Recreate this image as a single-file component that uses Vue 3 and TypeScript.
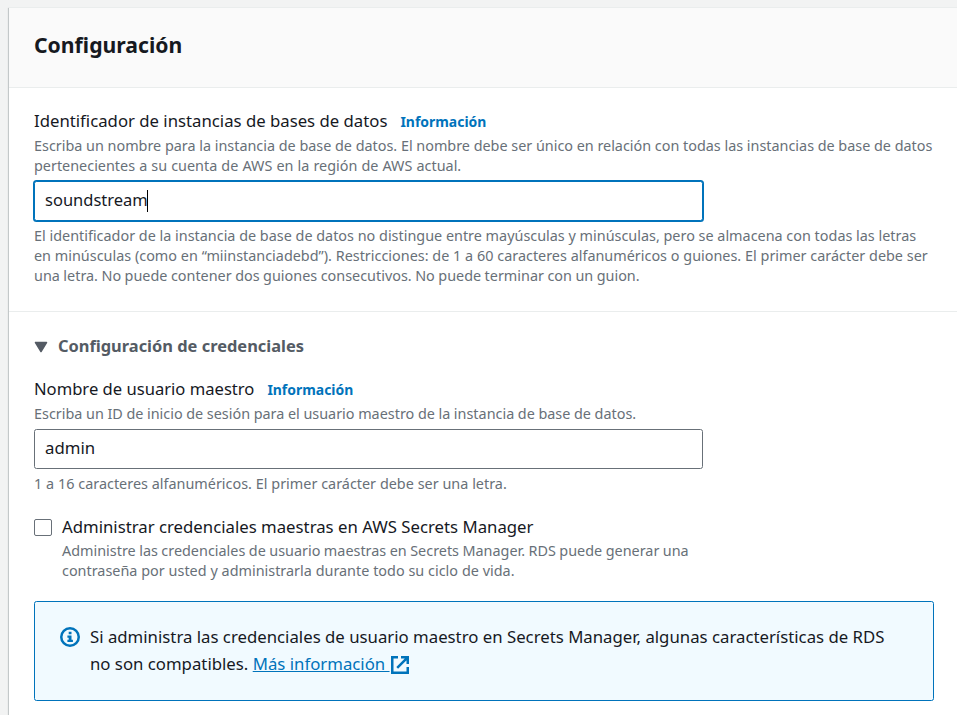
<script setup lang="ts">
import { ref } from 'vue'

const identifier = ref('soundstream')
const username = ref('admin')
const expanded = ref(true)
const managed = ref(false)
</script>

<template>
  <main class="page">
    <section class="card">
      <header class="card-header">
        <h2>Configuración</h2>
      </header>

      <div class="group identifier">
        <div class="label-row">
          <span class="label l-id">Identificador de instancias de bases de datos</span>
          <a class="info">Información</a>
        </div>
        <p class="hint">
          <span class="line w1">Escriba un nombre para la instancia de base de datos. El nombre debe ser único en relación con todas las instancias de base de datos</span>
          <span class="line w2">pertenecientes a su cuenta de AWS en la región de AWS actual.</span>
        </p>
        <div class="field focused"><span class="value v-id">{{ identifier }}</span><i class="caret"></i></div>
        <p class="hint">
          <span class="line">El identificador de la instancia de base de datos no distingue entre mayúsculas y minúsculas, pero se almacena con todas las letras</span>
          <span class="line w3">en minúsculas (como en “miinstanciadebd”). Restricciones: de 1 a 60 caracteres alfanuméricos o guiones. El primer carácter debe ser</span>
          <span class="line w4">una letra. No puede contener dos guiones consecutivos. No puede terminar con un guion.</span>
        </p>
      </div>

      <div class="group credentials">
        <h3 @click="expanded = !expanded">
          <svg class="arrow" viewBox="0 0 14 12" width="14" height="12"><path d="M1.5 1.5h11L7 10.5z" fill="#545b64" stroke="#545b64" stroke-width="1.5" stroke-linejoin="round" /></svg>
          <span>Configuración de credenciales</span>
        </h3>

        <template v-if="expanded">
          <div class="label-row">
            <span class="label l-user">Nombre de usuario maestro</span>
            <a class="info">Información</a>
          </div>
          <p class="hint"><span class="line w5">Escriba un ID de inicio de sesión para el usuario maestro de la instancia de base de datos.</span></p>
          <div class="field"><span class="value">{{ username }}</span></div>
          <p class="hint"><span class="line w6">1 a 16 caracteres alfanuméricos. El primer carácter debe ser una letra.</span></p>

          <div class="check" @click="managed = !managed">
            <span class="box" :class="{ on: managed }"></span>
            <div>
              <div class="label l-check">Administrar credenciales maestras en AWS Secrets Manager</div>
              <p class="hint">
                <span class="line w7">Administre las credenciales de usuario maestras en Secrets Manager. RDS puede generar una</span>
                <span class="line w6">contraseña por usted y administrarla durante todo su ciclo de vida.</span>
              </p>
            </div>
          </div>

          <div class="alert">
            <svg class="info-icon" viewBox="0 0 20 20" width="20" height="20">
              <circle cx="10" cy="10" r="8.75" fill="none" stroke="#0073bb" stroke-width="2.5" />
              <path d="M8.7 4.8h2.8v2.5H8.7zM7.4 8.5h4.1v4.3h1.4V15H7.4v-2.2h1.3v-2.1H7.4z" fill="#0073bb" />
            </svg>
            <div class="message">
              <span class="line">Si administra las credenciales de usuario maestro en Secrets Manager, algunas características de RDS</span>
              <span class="line last"><span>no son compatibles.&nbsp;</span><a class="more">Más información&nbsp;</a><svg class="external" viewBox="0 0 18 18" width="18" height="18"><path d="M7 1.25H1.25v15.5h15.5V11M10 1.25h6.75V8M16.4 1.6L6.2 11.8" fill="none" stroke="#0073bb" stroke-width="2.5" /></svg></span>
            </div>
          </div>
        </template>
      </div>
    </section>
  </main>
</template>

<style>
body {
  background: #f2f3f3;
  overflow: hidden;
}
</style>

<style scoped>
.page {
  box-sizing: border-box;
  height: 715px;
  padding: 7px 0 0 9px;
  overflow: hidden;
  font-family: "Noto Sans", "Open Sans", sans-serif;
  color: #16191f;
}
.card {
  min-height: 740px;
  background: #fff;
  border-top: 1px solid #eaeded;
  box-shadow: 0 1px 1px 0 rgba(0, 28, 36, 0.3), -1px 1px 1px 0 rgba(0, 28, 36, 0.15);
}
.card-header {
  box-sizing: border-box;
  height: 80px;
  padding: 22px 25px 0;
  background: #fafafa;
  border-bottom: 1px solid #eaeded;
}
h2, h3, p { margin: 0; }
h2 {
  font-size: 21.2px;
  line-height: 30px;
  font-weight: 700;
}
.group { padding: 0 23px 0 25px; }
.identifier {
  padding-top: 20px;
  padding-bottom: 25px;
  border-bottom: 1px solid #eaeded;
}
.credentials { padding-top: 20px; }
.label-row {
  display: flex;
  align-items: flex-start;
  height: 27px;
  gap: 13px;
  margin-bottom: 1px;
  white-space: nowrap;
}
.label {
  height: 27px;
  font-size: 16.74px;
  line-height: 25px;
  white-space: nowrap;
}
.l-user { font-size: 16.6px; }
.l-check { font-size: 16.75px; }
.info {
  padding-top: 1px;
  font-size: 13.95px;
  line-height: 26px;
  font-weight: 700;
  color: #0073bb;
}
.hint {
  font-size: 14.4px;
  line-height: 20px;
  color: #687078;
}
.line {
  display: block;
  white-space: nowrap;
}
.w1 { word-spacing: -0.06px; }
.w2 { word-spacing: 0.35px; }
.w3 { word-spacing: 0.06px; }
.w4 { word-spacing: -0.25px; }
.w5 { word-spacing: -0.12px; }
.w6 { word-spacing: 0.1px; }
.w7 { word-spacing: -0.25px; }
.field {
  box-sizing: border-box;
  display: flex;
  align-items: center;
  width: 669px;
  height: 40px;
  margin: 5px 0;
  padding: 0 10px;
  border: 1px solid #687078;
  border-radius: 2.5px;
  background: #fff;
  font-size: 16.8px;
}
.focused {
  border-color: #0073bb;
  box-shadow: 0 0 0 1px #0073bb;
}
.value {
  padding-bottom: 2px;
  line-height: 24px;
}
.v-id { font-size: 16.5px; }
.caret {
  width: 1px;
  height: 22px;
  margin-left: -1px;
  background: #000;
}
h3 {
  display: flex;
  align-items: center;
  gap: 10px;
  height: 28px;
  margin-bottom: 16px;
  font-size: 16.43px;
  line-height: 28px;
  color: #545b64;
}
.arrow { margin-top: 2px; }
.check {
  display: flex;
  gap: 10px;
  margin-top: 20px;
}
.box {
  box-sizing: border-box;
  width: 18px;
  height: 17px;
  margin-top: 5px;
  border: 1px solid #687078;
  border-radius: 2px;
  background: #fff;
}
.box.on { background: #0073bb; }
.alert {
  box-sizing: border-box;
  display: flex;
  gap: 10px;
  height: 100px;
  margin-top: 20px;
  padding: 21px 25px;
  border: 1px solid #0073bb;
  border-radius: 2.5px;
  background: #f1faff;
}
.info-icon { margin-top: 4px; }
.message {
  font-size: 16.77px;
  line-height: 27px;
}
.last {
  display: flex;
  align-items: center;
}
.more {
  color: #0073bb;
  text-decoration: underline;
}
.external { margin: 2px 0 0 1px; }
</style>
